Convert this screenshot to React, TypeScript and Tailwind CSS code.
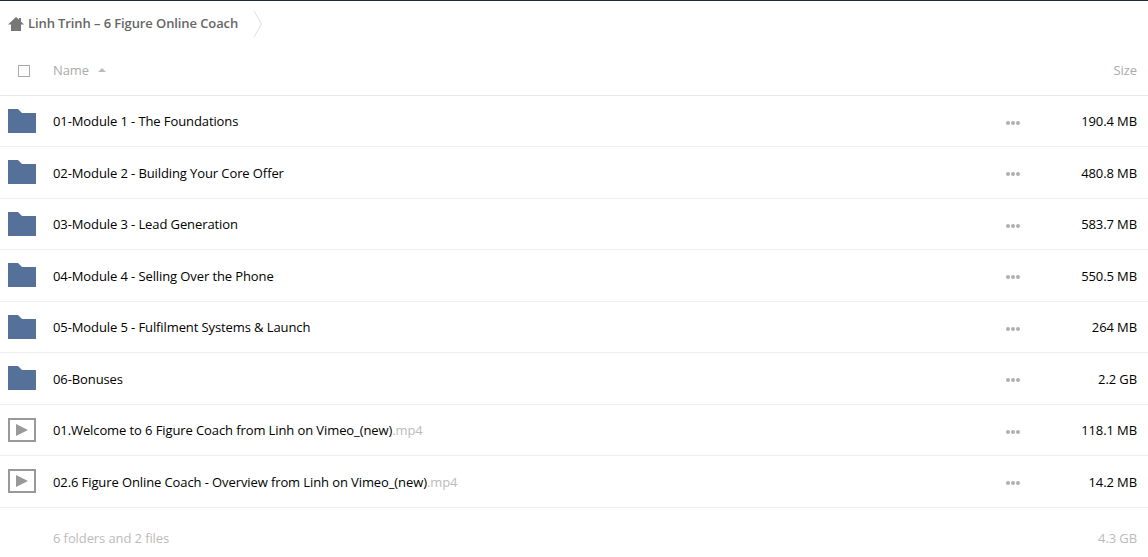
const rows = [
  { name: '01-Module 1 - The Foundations', size: '190.4 MB' },
  { name: '02-Module 2 - Building Your Core Offer', size: '480.8 MB' },
  { name: '03-Module 3 - Lead Generation', size: '583.7 MB' },
  { name: '04-Module 4 - Selling Over the Phone', size: '550.5 MB' },
  { name: '05-Module 5 - Fulfilment Systems & Launch', size: '264 MB' },
  { name: '06-Bonuses', size: '2.2 GB' },
  { name: '01.Welcome to 6 Figure Coach from Linh on Vimeo_(new)', ext: '.mp4', size: '118.1 MB' },
  { name: '02.6 Figure Online Coach - Overview from Linh on Vimeo_(new)', ext: '.mp4', size: '14.2 MB' },
];

function FolderIcon() {
  return (
    <svg width="28" height="24" viewBox="0 0 28 24" className="block">
      <path d="M0 0h10l4 4h14v20H0z" fill="#557199" />
    </svg>
  );
}

function VideoIcon() {
  return (
    <svg width="28" height="24" viewBox="0 0 28 24" className="block">
      <rect x="1" y="1" width="26" height="22" fill="none" stroke="#999" strokeWidth="2" />
      <path d="M8 6l12 6-12 6z" fill="#999" />
    </svg>
  );
}

function HomeIcon() {
  return (
    <svg width="16" height="14" viewBox="0 0 16 14" className="block">
      <path d="M8 0l3 2.600V1h2v3.400L16 7.500h-3V14H3V7.500H0z" fill="#777" />
    </svg>
  );
}

export default function App() {
  return (
    <div className="h-[557px] w-[1148px] overflow-hidden border-t border-[#1c2b41] bg-white font-['Open_Sans',sans-serif] text-[13px] tracking-[-0.1px] text-black">
      <div className="flex h-[45px] items-center pl-2">
        <HomeIcon />
        <span className="ml-1 font-semibold text-[#666]">Linh Trinh – 6 Figure Online Coach</span>
        <svg width="10" height="28" viewBox="0 0 10 28" className="ml-[15px]">
          <path d="M1 1l7.500 13L1 27" fill="none" stroke="#e0e0e0" />
        </svg>
      </div>

      <div className="flex h-[49.500px] items-center border-b border-[#e8e8e8] pr-[11px] text-[#aaa]">
        <span className="ml-[18px] mt-0.5 h-3 w-3 border border-[#aaa]" />
        <span className="ml-[23px]">Name</span>
        <span className="ml-[9px] h-0 w-0 border-x-4 border-b-4 border-x-transparent border-b-[#bbb]" />
        <span className="ml-auto">Size</span>
      </div>

      {rows.map((row) => (
        <div key={row.name} className="flex h-[51.500px] items-center border-b border-[#eee] pr-[11px]">
          <span className="ml-2 w-[45px] shrink-0">{row.ext ? <VideoIcon /> : <FolderIcon />}</span>
          <span className="whitespace-nowrap pt-0.5">
            {row.name}
            {row.ext && <span className="text-[#bbb]">{row.ext}</span>}
          </span>
          <span className="ml-auto flex gap-[1px] pt-1">
            <i className="size-1 rounded-full bg-[#b0b0b0]" />
            <i className="size-1 rounded-full bg-[#b0b0b0]" />
            <i className="size-1 rounded-full bg-[#b0b0b0]" />
          </span>
          <span className="w-[117px] shrink-0 pt-0.5 text-right">{row.size}</span>
        </div>
      ))}

      <div className="flex h-[60px] items-center pl-[53px] pr-[11px] pt-0.5 text-[#bbb]">
        <span>6 folders and 2 files</span>
        <span className="ml-auto">4.3 GB</span>
      </div>
    </div>
  );
}
